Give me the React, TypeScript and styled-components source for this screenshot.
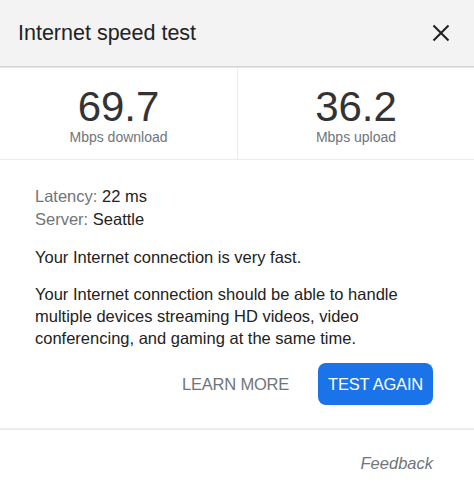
import React from "react";
import styled, { createGlobalStyle } from "styled-components";

const GlobalStyle = createGlobalStyle`
  html, body {
    margin: 0;
    padding: 0;
    background: #ffffff;
  }
  body {
    font-family: "Liberation Sans", Arial, Helvetica, sans-serif;
    color: #222222;
  }
`;

const Panel = styled.div`
  width: 474px;
  min-height: 492px;
  display: flex;
  flex-direction: column;
  background: #ffffff;
`;

const Header = styled.header`
  height: 66px;
  display: flex;
  align-items: center;
  justify-content: space-between;
  padding: 0 24px 0 18px;
  background: #f3f3f3;
  border-bottom: 1px solid #d4d4d4;
  box-shadow: 0 1px 0 #e6e6e6;
`;

const Title = styled.h1`
  margin: 0;
  font-size: 21.5px;
  font-weight: 400;
  color: #222222;
  letter-spacing: 0;
`;

const CloseButton = styled.button`
  width: 18px;
  height: 18px;
  padding: 0;
  border: 0;
  background: transparent;
  display: flex;
  align-items: center;
  justify-content: center;
  cursor: pointer;
`;

const Stats = styled.section`
  display: grid;
  grid-template-columns: 1fr 1fr;
  border-bottom: 1px solid #ececec;
  margin-top: 1px;
`;

const Stat = styled.div<{ $divider?: boolean }>`
  display: flex;
  flex-direction: column;
  align-items: center;
  padding: 15px 0 14px;
  border-left: ${(p) => (p.$divider ? "1px solid #ececec" : "none")};
`;

const Value = styled.div`
  font-size: 42px;
  line-height: 47px;
  color: #333333;
`;

const Unit = styled.div`
  font-size: 14px;
  line-height: 16px;
  margin-top: -1px;
  color: #70757a;
`;

const Body = styled.section`
  padding: 25px 41px 14px 35px;
  display: flex;
  flex-direction: column;
  gap: 15px;
  font-size: 16.5px;
  line-height: 22px;
`;

const InfoList = styled.div`
  display: flex;
  flex-direction: column;
`;

const InfoLine = styled.div`
  line-height: 23px;
  color: #222222;
`;

const InfoLabel = styled.span`
  color: #70757a;
`;

const Text = styled.p`
  margin: 0;
  color: #222222;
`;

const Actions = styled.div`
  display: flex;
  justify-content: flex-end;
  align-items: center;
  gap: 17px;
  padding: 0 41px 23px 35px;
`;

const ActionButton = styled.button<{ $primary?: boolean }>`
  height: 42px;
  padding: 0 ${(p) => (p.$primary ? "10px" : "12px")};
  border: 0;
  border-radius: 8px;
  font-family: "Liberation Sans", Arial, Helvetica, sans-serif;
  font-size: 16.5px;
  letter-spacing: -0.2px;
  background: ${(p) => (p.$primary ? "#1a73e8" : "transparent")};
  color: ${(p) => (p.$primary ? "#ffffff" : "#70757a")};
  cursor: pointer;
`;

const Footer = styled.footer`
  border-top: 2px solid #ededed;
  display: flex;
  justify-content: flex-end;
  padding: 22px 41px 0 0;
`;

const FeedbackLink = styled.a`
  font-size: 16.5px;
  line-height: 22px;
  font-style: italic;
  color: #70757a;
  text-decoration: none;
`;

export default function App() {
  return (
    <>
      <GlobalStyle />
      <Panel>
        <Header>
          <Title>Internet speed test</Title>
          <CloseButton aria-label="Close">
            <svg width="18" height="18" viewBox="0 0 18 18">
              <path d="M1.5 1.5 L16.5 16.5 M16.5 1.5 L1.5 16.5" stroke="#222" strokeWidth="2.1" fill="none" />
            </svg>
          </CloseButton>
        </Header>
        <Stats>
          <Stat>
            <Value>69.7</Value>
            <Unit>Mbps download</Unit>
          </Stat>
          <Stat $divider>
            <Value>36.2</Value>
            <Unit>Mbps upload</Unit>
          </Stat>
        </Stats>
        <Body>
          <InfoList>
            <InfoLine>
              <InfoLabel>Latency:</InfoLabel> 22 ms
            </InfoLine>
            <InfoLine>
              <InfoLabel>Server:</InfoLabel> Seattle
            </InfoLine>
          </InfoList>
          <Text>Your Internet connection is very fast.</Text>
          <Text>
            Your Internet connection should be able to handle multiple devices streaming HD videos, video
            conferencing, and gaming at the same time.
          </Text>
        </Body>
        <Actions>
          <ActionButton>LEARN MORE</ActionButton>
          <ActionButton $primary>TEST AGAIN</ActionButton>
        </Actions>
        <Footer>
          <FeedbackLink href="#">Feedback</FeedbackLink>
        </Footer>
      </Panel>
    </>
  );
}
